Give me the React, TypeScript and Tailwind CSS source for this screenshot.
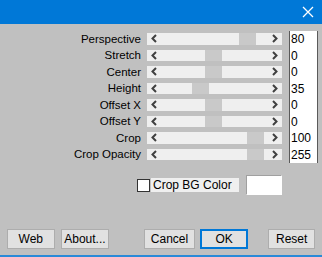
import React from "react";

const rows = [
  { label: "Perspective", value: "80", thumb: 92 },
  { label: "Stretch", value: "0", thumb: 58 },
  { label: "Center", value: "0", thumb: 58 },
  { label: "Height", value: "35", thumb: 45 },
  { label: "Offset X", value: "0", thumb: 58 },
  { label: "Offset Y", value: "0", thumb: 58 },
  { label: "Crop", value: "100", thumb: 100 },
  { label: "Crop Opacity", value: "255", thumb: 100 },
];

function Chevron({ dir }: { dir: "left" | "right" }) {
  return (
    <svg width="8" height="9" viewBox="0 0 8 9" className="shrink-0">
      <path
        d={dir === "left" ? "M6 1 L2.5 4.5 L6 8" : "M2 1 L5.5 4.5 L2 8"}
        fill="none"
        stroke="#404040"
        strokeWidth="2"
      />
    </svg>
  );
}

function Btn({ children, primary }: { children: React.ReactNode; primary?: boolean }) {
  return (
    <div
      className={`h-[20px] flex items-center justify-center bg-[#e1e1e1] text-[12px] text-black ${
        primary ? "border-2 border-[#0078d7]" : "border border-[#adadad]"
      }`}
    >
      {children}
    </div>
  );
}

export default function App() {
  return (
    <div
      className="w-[322px] h-[257px] bg-[#c0c0c0] flex flex-col border-b-2 border-[#2a8ad8]"
      style={{ fontFamily: '"Liberation Sans", Arial, sans-serif' }}
    >
      {/* Title bar */}
      <div className="h-[24px] bg-[#0078d7] flex items-center justify-end pr-[8px]">
        <svg width="12" height="12" viewBox="0 0 12 12">
          <path d="M1 1 L11 11 M11 1 L1 11" stroke="#ffffff" strokeWidth="1.3" />
        </svg>
      </div>

      {/* Slider rows */}
      <div className="flex pt-[7px]">
        <div className="w-[141px] flex flex-col">
          {rows.map((r) => (
            <div key={r.label} className="h-[16.5px] flex items-center justify-end text-[11.5px] leading-none text-black">
              {r.label}
            </div>
          ))}
        </div>
        <div className="ml-[6px] w-[135px] flex flex-col">
          {rows.map((r) => (
            <div key={r.label} className="h-[16.5px] pt-[2px]">
              <div className="relative h-[11.5px] bg-[#efefef] flex items-center justify-between px-[3px]">
                <Chevron dir="left" />
                <div
                  className="absolute top-0 h-full w-[17px] bg-[#c9c9c9]"
                  style={{ left: r.thumb }}
                />
                <Chevron dir="right" />
              </div>
            </div>
          ))}
        </div>
        <div className="ml-[7px] w-[29px] flex flex-col bg-white border-x border-[#5a5a5a]">
          {rows.map((r) => (
            <div key={r.label} className="h-[16.5px] flex items-center pl-[1px] text-[12px] leading-none text-black">
              {r.value}
            </div>
          ))}
        </div>
      </div>

      {/* Crop BG color */}
      <div className="flex items-center mt-[12px] ml-[137px]">
        <div className="w-[13px] h-[13px] bg-white border border-[#333333]" />
        <div className="ml-[1px] h-[14px] w-[88px] bg-[#efefef] flex items-center pl-[2px] text-[12px] leading-none text-black">
          Crop BG Color
        </div>
        <div className="ml-[7px] w-[36px] h-[20px] bg-white border border-[#a0a0a0] border-b-[#ffffff] border-r-[#ffffff]" />
      </div>

      {/* Buttons */}
      <div className="flex items-center mt-[34px] px-[7px]">
        <div className="w-[48px]"><Btn>Web</Btn></div>
        <div className="w-[49px] ml-[6px]"><Btn>About...</Btn></div>
        <div className="w-[51px] ml-[35px]"><Btn>Cancel</Btn></div>
        <div className="w-[49px] ml-[5px]"><Btn primary>OK</Btn></div>
        <div className="w-[47px] ml-[20px]"><Btn>Reset</Btn></div>
      </div>
    </div>
  );
}
